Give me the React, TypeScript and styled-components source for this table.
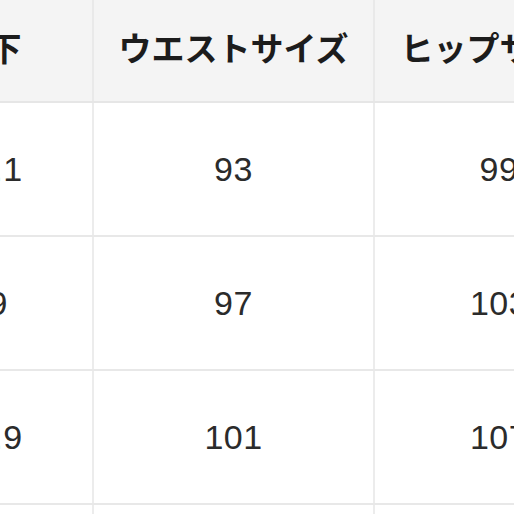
import React from 'react';
import styled, { createGlobalStyle } from 'styled-components';

const GlobalStyle = createGlobalStyle`
  html, body {
    margin: 0;
    padding: 0;
    background: #ffffff;
    overflow: hidden;
  }
`;

type Row = { inseam: string; waist: string; hip: string };

const rows: Row[] = [
  { inseam: '76.1', waist: '93', hip: '99' },
  { inseam: '79', waist: '97', hip: '103' },
  { inseam: '76.9', waist: '101', hip: '107' },
  { inseam: '80', waist: '105', hip: '111' },
];

const SizeTable: React.FC = () => {
  return (
    <StyledViewport>
      <StyledTable>
        <colgroup>
          <col style={{ width: 208 }} />
          <col style={{ width: 281 }} />
          <col style={{ width: 250 }} />
        </colgroup>
        <thead>
          <tr>
            <StyledHead>股下</StyledHead>
            <StyledHead>ウエストサイズ</StyledHead>
            <StyledHead>ヒップサイズ</StyledHead>
          </tr>
        </thead>
        <tbody>
          {rows.map((row) => (
            <tr key={row.waist}>
              <StyledCell>{row.inseam}</StyledCell>
              <StyledCell>{row.waist}</StyledCell>
              <StyledCell>{row.hip}</StyledCell>
            </tr>
          ))}
        </tbody>
      </StyledTable>
    </StyledViewport>
  );
};

const App: React.FC = () => (
  <>
    <GlobalStyle />
    <SizeTable />
  </>
);

const StyledViewport = styled.div`
  width: 514px;
  height: 514px;
  overflow: hidden;
`;

const StyledTable = styled.table`
  border-collapse: collapse;
  table-layout: fixed;
  width: 739px;
  margin-left: -115px;
`;

const StyledHead = styled.th`
  height: 102px;
  padding: 0 0 8px;
  box-sizing: border-box;
  background: #f4f4f4;
  border-right: 2px solid #e9e9e9;
  border-bottom: 2px solid #e6e6e6;
  font-family: 'Noto Sans CJK JP', 'Noto Sans', sans-serif;
  font-size: 33px;
  font-weight: 700;
  color: #1c1c1c;
  text-align: center;
  white-space: nowrap;
  vertical-align: middle;
`;

const StyledCell = styled.td`
  height: 134px;
  padding: 0;
  box-sizing: border-box;
  border-right: 2px solid #ececec;
  border-bottom: 2px solid #e8e8e8;
  font-family: 'Liberation Sans', Arial, sans-serif;
  font-size: 34px;
  letter-spacing: 0.5px;
  color: #2b2b2b;
  text-align: center;
  vertical-align: middle;
`;

export default App;
